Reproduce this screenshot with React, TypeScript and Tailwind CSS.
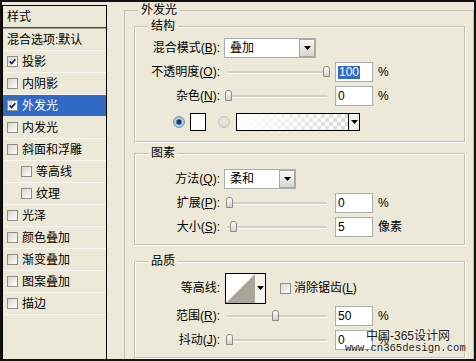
import React from "react";

type StyleItem = { label: string; checked?: boolean; selected?: boolean; indent?: boolean };

const styleItems: StyleItem[] = [
  { label: "投影", checked: true },
  { label: "内阴影" },
  { label: "外发光", checked: true, selected: true },
  { label: "内发光" },
  { label: "斜面和浮雕" },
  { label: "等高线", indent: true },
  { label: "纹理", indent: true },
  { label: "光泽" },
  { label: "颜色叠加" },
  { label: "渐变叠加" },
  { label: "图案叠加" },
  { label: "描边" },
];

function CheckBox({ checked }: { checked?: boolean }) {
  return (
    <span className="w-[11px] h-[11px] shrink-0 border border-[#8f8f8a] bg-linear-to-br from-[#d6d6cf] to-white flex items-center justify-center">
      {checked && (
        <svg width="7" height="7" viewBox="0 0 7 7">
          <path d="M0.6 3.4 L2.6 5.4 L6.4 1.2" stroke="#1d2461" strokeWidth="1.7" fill="none" />
        </svg>
      )}
    </span>
  );
}

function Radio({ on }: { on?: boolean }) {
  return (
    <svg width="12" height="12" viewBox="0 0 12 12" className="shrink-0">
      <circle cx="6" cy="6" r="5.4" fill={on ? "#b8cfe3" : "#e4e4df"} stroke={on ? "#6d89a8" : "#b8b8b1"} />
      {on && <circle cx="6" cy="6" r="2.7" fill="#123f78" />}
    </svg>
  );
}

function Arrow() {
  return (
    <svg width="7" height="4" viewBox="0 0 7 4">
      <path d="M0 0h7L3.5 4z" fill="#000" />
    </svg>
  );
}

function DropButton() {
  return (
    <span className="w-[16px] h-[18px] border border-[#a9a89e] bg-linear-to-b from-[#f7f7f3] to-[#d9d7cd] flex items-center justify-center">
      <Arrow />
    </span>
  );
}

function Select({ value, wide }: { value: string; wide?: boolean }) {
  return (
    <div
      className={
        wide
          ? "w-[92px] h-[20px] border border-[#a9aeb3] bg-white flex items-center"
          : "w-[72px] h-[20px] border border-[#a9aeb3] bg-white flex items-center"
      }
    >
      <span className="flex-1 pl-[5px]">{value}</span>
      <DropButton />
    </div>
  );
}

function Slider({ pos }: { pos: number }) {
  return (
    <div className="relative w-[108px] h-[14px] shrink-0">
      <div className="absolute left-[3px] right-[5px] top-[6px] h-[3px] bg-[#d4d2c8] border-b border-white" />
      <div
        className="absolute top-[1px] w-[7px] h-[11px] rounded-t-[3px] border border-[#8d8e8a] bg-linear-to-b from-white to-[#d2d1ca]"
        style={{ left: pos }}
      />
    </div>
  );
}

function Field({ value, selected }: { value: string; selected?: boolean }) {
  return (
    <div className="w-[38px] h-[20px] ml-[3px] border border-[#a9aeb3] bg-white flex items-center pl-[2px]">
      {selected ? <span className="bg-[#316ac5] text-white px-[1px] leading-[13px]">{value}</span> : value}
    </div>
  );
}

function Label({ text, k }: { text: string; k?: string }) {
  return (
    <span className="w-[85px] shrink-0 text-right">
      {text}
      {k && (
        <>
          (<u>{k}</u>)
        </>
      )}
      :
    </span>
  );
}

function SliderRow({ text, k, pos, value, unit, selected }: { text: string; k: string; pos: number; value: string; unit: string; selected?: boolean }) {
  return (
    <div className="h-[24px] flex items-center">
      <Label text={text} k={k} />
      <span className="ml-[4px] flex items-center">
        <Slider pos={pos} />
        <Field value={value} selected={selected} />
        <span className="ml-[5px]">{unit}</span>
      </span>
    </div>
  );
}

function Group({ title, className, children }: { title: string; className: string; children: React.ReactNode }) {
  return (
    <div className={"relative border border-[#c4c1b1] shadow-[inset_1px_1px_0_#fff,1px_1px_0_#fff] " + className}>
      <span className="absolute left-[13px] -top-[8px] px-[3px] bg-[#ece9d8] leading-[14px]">{title}</span>
      {children}
    </div>
  );
}

export default function App() {
  return (
    <div className="relative w-[476px] h-[361px] overflow-hidden bg-[#ece9d8] border-2 border-[#111] flex text-[12px] leading-[14px] text-black font-['Liberation_Sans','Noto_Sans_CJK_SC',sans-serif]">
      {/* style list */}
      <div className="w-[105px] mt-[3px] border-l border-t border-r border-black flex flex-col">
        <div className="h-[22px] flex items-center pl-[4px] border-b border-[#4a4a4a]">样式</div>
        <div className="h-[1px] bg-[#a09e94]" />
        <div className="h-[22px] flex items-center pl-[4px] border-b border-[#f8f7f1]">混合选项:默认</div>
        {styleItems.map((it) => (
          <div
            key={it.label}
            className={
              (it.selected ? "bg-[#316ac5] text-white border-[#ece9d8] " : "border-[#f8f7f1] ") +
              (it.indent ? "pl-[18px] " : "pl-[4px] ") +
              "h-[22px] flex items-center gap-[4px] border-b"
            }
          >
            <CheckBox checked={it.checked} />
            <span>{it.label}</span>
          </div>
        ))}
      </div>

      {/* settings */}
      <div className="ml-[17px] w-[350px] flex flex-col">
        <div className="relative mt-[8px] flex-1 border-t border-l border-r border-[#c4c1b1] pl-[9px] pr-[8px]">
          <span className="absolute left-[13px] -top-[8px] px-[3px] bg-[#ece9d8] leading-[14px]">外发光</span>

          <Group title="结构" className="mt-[15px] h-[116px] pt-[9px]">
            <div className="h-[24px] flex items-center">
              <Label text="混合模式" k="B" />
              <span className="ml-[4px]">
                <Select value="叠加" wide />
              </span>
            </div>
            <SliderRow text="不透明度" k="O" pos={99} value="100" unit="%" selected />
            <SliderRow text="杂色" k="N" pos={1} value="0" unit="%" />
            <div className="h-[28px] flex items-center pl-[38px]">
              <Radio on />
              <span className="ml-[5px] w-[16px] h-[18px] border border-black bg-white" />
              <span className="ml-[12px]">
                <Radio />
              </span>
              <span className="ml-[6px] h-[18px] border border-black flex">
                <span className="w-[111px] h-full bg-[repeating-conic-gradient(#d9d9d9_0%_25%,#ffffff_0%_50%)] bg-[length:8px_8px]">
                  <span className="block w-full h-full bg-linear-to-r from-white to-white/0" />
                </span>
                <span className="w-[11px] border-l border-black bg-[#f2f1ea] flex items-center justify-center">
                  <Arrow />
                </span>
              </span>
            </div>
          </Group>

          <Group title="图素" className="mt-[11px] h-[92px] pt-[13px]">
            <div className="h-[24px] flex items-center">
              <Label text="方法" k="Q" />
              <span className="ml-[4px]">
                <Select value="柔和" />
              </span>
            </div>
            <SliderRow text="扩展" k="P" pos={2} value="0" unit="%" />
            <SliderRow text="大小" k="S" pos={6} value="5" unit="像素" />
          </Group>

          <Group title="品质" className="mt-[16px] h-[97px] pt-[10px]">
            <div className="h-[32px] flex items-center">
              <Label text="等高线" />
              <span className="ml-[5px] w-[41px] h-[31px] border border-black flex">
                <svg width="29" height="29" viewBox="0 0 29 29" className="bg-white">
                  <path d="M0 29 L29 0 L29 29 Z" fill="#a8a697" />
                </svg>
                <span className="flex-1 bg-[#f3f2ec] flex items-center justify-center">
                  <Arrow />
                </span>
              </span>
              <span className="ml-[14px]">
                <CheckBox />
              </span>
              <span className="ml-[3px]">
                消除锯齿(<u>L</u>)
              </span>
            </div>
            <SliderRow text="范围" k="R" pos={48} value="50" unit="%" />
            <SliderRow text="抖动" k="J" pos={2} value="0" unit="%" />
          </Group>
        </div>
      </div>

      {/* watermark */}
      <div className="absolute left-[364px] top-[327px] text-[12px] leading-[14px] text-[#1a1a1a] [text-shadow:0_0_2px_#fff]">
        中国-365设计网
      </div>
      <div className="absolute left-[343px] top-[340px] text-[10.6px] leading-[12px] text-[#1a1a1a] font-['Liberation_Mono',monospace] [text-shadow:0_0_2px_#fff]">
        www.cn365design.com
      </div>
    </div>
  );
}
